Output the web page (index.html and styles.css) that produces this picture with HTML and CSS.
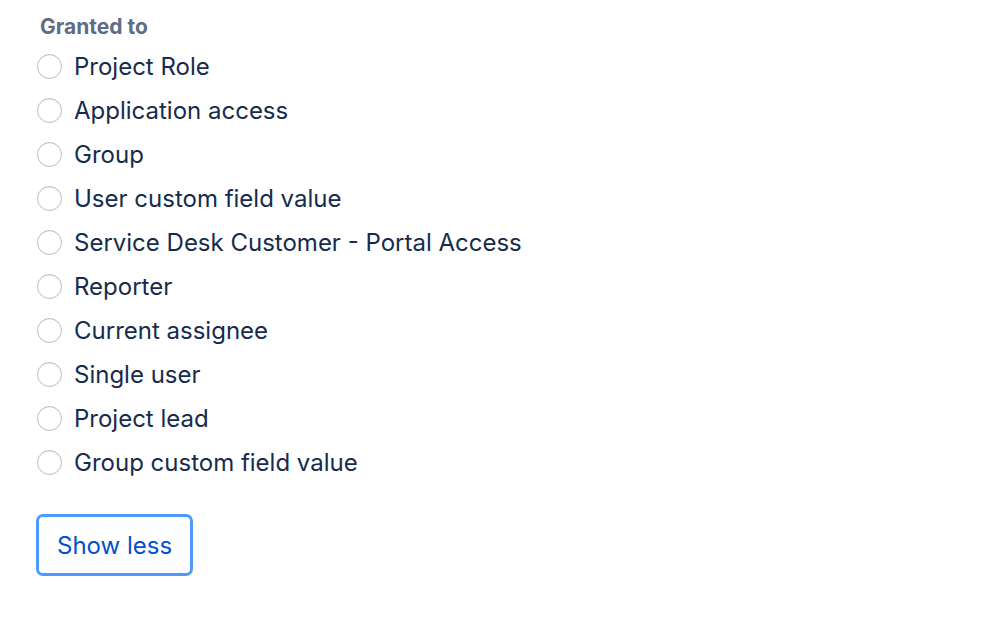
FILE: index.html
```html
<!DOCTYPE html>
<html>
<head>
<meta charset="utf-8">
<link rel="stylesheet" href="styles.css">
</head>
<body>
<div class="field">
  <div class="label">Granted to</div>
  <ul class="options">
    <li class="option"><span class="radio"></span><span class="text">Project Role</span></li>
    <li class="option"><span class="radio"></span><span class="text">Application access</span></li>
    <li class="option"><span class="radio"></span><span class="text">Group</span></li>
    <li class="option"><span class="radio"></span><span class="text">User custom field value</span></li>
    <li class="option"><span class="radio"></span><span class="text">Service Desk Customer - Portal Access</span></li>
    <li class="option"><span class="radio"></span><span class="text">Reporter</span></li>
    <li class="option"><span class="radio"></span><span class="text">Current assignee</span></li>
    <li class="option"><span class="radio"></span><span class="text">Single user</span></li>
    <li class="option"><span class="radio"></span><span class="text">Project lead</span></li>
    <li class="option"><span class="radio"></span><span class="text">Group custom field value</span></li>
  </ul>
  <button class="toggle">Show less</button>
</div>
</body>
</html>
```

FILE: styles.css
```css
html, body {
  margin: 0;
  padding: 0;
  background: #ffffff;
}
body {
  font-family: Inter, "Liberation Sans", Arial, sans-serif;
  color: #172B4D;
}
.field {
  padding: 13px 0 0 36px;
  display: flex;
  flex-direction: column;
  align-items: flex-start;
}
.label {
  font-size: 21px;
  font-weight: 700;
  color: #5E6C84;
  line-height: 28px;
  padding-left: 4px;
  margin-bottom: 3px;
}
.options {
  list-style: none;
  margin: 0;
  padding: 0;
}
.option {
  display: flex;
  align-items: center;
  height: 44px;
}
.radio {
  width: 23px;
  height: 23px;
  border: 1px solid #BDBDBD;
  border-radius: 50%;
  background: #fff;
  margin-left: 1px;
  box-shadow: inset 0 1px 1px rgba(0,0,0,0.06);
}
.text {
  font-size: 24px;
  margin-left: 12px;
}
.toggle {
  margin-top: 30px;
  height: 62px;
  padding: 0 18px;
  border: 3px solid #4C9AFF;
  border-radius: 7px;
  background: #fff;
  color: #0052CC;
  font-family: Inter, "Liberation Sans", Arial, sans-serif;
  font-size: 24px;
}
```
